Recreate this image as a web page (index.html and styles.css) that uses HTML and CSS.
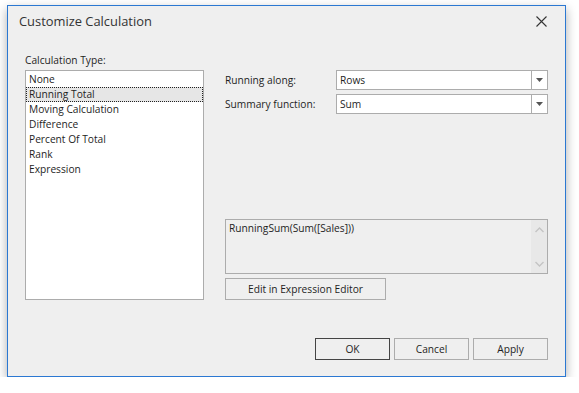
FILE: index.html
```html
<!DOCTYPE html>
<html>
<head>
<meta charset="utf-8">
<link rel="stylesheet" href="styles.css">
</head>
<body>
<div class="dialog">
  <div class="titlebar">
    <span class="title">Customize Calculation</span>
    <svg class="close" width="11" height="11" viewBox="0 0 11 11"><path d="M0.5 0.5 L10.5 10.5 M10.5 0.5 L0.5 10.5" stroke="#333" stroke-width="1.1" fill="none"/></svg>
  </div>
  <div class="content">
    <div class="left">
      <div class="group-label">Calculation Type:</div>
      <ul class="list">
        <li>None</li>
        <li class="selected">Running Total</li>
        <li>Moving Calculation</li>
        <li>Difference</li>
        <li>Percent Of Total</li>
        <li>Rank</li>
        <li>Expression</li>
      </ul>
    </div>
    <div class="right">
      <div class="field">
        <span class="field-label">Running along:</span>
        <div class="combo"><span class="combo-text">Rows</span><span class="combo-btn"><svg width="7" height="4" viewBox="0 0 7 4"><path d="M0 0 H7 L3.5 4 Z" fill="#555"/></svg></span></div>
      </div>
      <div class="field">
        <span class="field-label">Summary function:</span>
        <div class="combo"><span class="combo-text">Sum</span><span class="combo-btn"><svg width="7" height="4" viewBox="0 0 7 4"><path d="M0 0 H7 L3.5 4 Z" fill="#555"/></svg></span></div>
      </div>
      <div class="spacer"></div>
      <div class="memo">
        <span class="memo-text">RunningSum(Sum([Sales]))</span>
        <div class="scrollbar">
          <svg width="9" height="6" viewBox="0 0 9 6"><path d="M0.5 5 L4.5 1 L8.5 5" stroke="#c4c4c4" stroke-width="1.4" fill="none"/></svg>
          <svg width="9" height="6" viewBox="0 0 9 6"><path d="M0.5 1 L4.5 5 L8.5 1" stroke="#c4c4c4" stroke-width="1.4" fill="none"/></svg>
        </div>
      </div>
      <button class="btn btn-wide">Edit in Expression Editor</button>
    </div>
  </div>
  <div class="footer">
    <button class="btn btn-default">OK</button>
    <button class="btn">Cancel</button>
    <button class="btn">Apply</button>
  </div>
</div>
</body>
</html>
```
FILE: styles.css
```css
html, body {
  margin: 0;
  padding: 0;
  background: #ffffff;
}
body {
  font-family: "Open Sans", "Noto Sans", sans-serif;
  font-size: 10.2px;
  color: #1e1e1e;
}
.dialog {
  margin: 5px 0 0 7px;
  width: 559px;
  height: 372px;
  box-sizing: border-box;
  border: 1px solid #2b78d2;
  background: #efefef;
  box-shadow: 0 4px 10px rgba(0,0,0,0.32);
  display: flex;
  flex-direction: column;
}
.titlebar {
  height: 30px;
  display: flex;
  align-items: center;
  justify-content: space-between;
  padding: 0 18px 0 11px;
}
.title {
  font-size: 12.9px;
  color: #333;
}
.close {
  display: block;
}
.content {
  display: flex;
  padding: 0 17px;
  gap: 21px;
}
.left {
  width: 179px;
  display: flex;
  flex-direction: column;
}
.group-label {
  height: 34px;
  line-height: 16px;
  padding-top: 16px;
  box-sizing: border-box;
}
.list {
  list-style: none;
  margin: 0;
  padding: 1px 0;
  height: 230px;
  box-sizing: border-box;
  border: 1px solid #acacac;
  background: #fff;
}
.list li {
  height: 15px;
  line-height: 15px;
  padding-left: 3px;
  box-sizing: border-box;
}
.list li.selected {
  background: #e6e6e6;
  outline: 1px dotted #222;
  outline-offset: -1px;
}
.right {
  flex: 1;
  display: flex;
  flex-direction: column;
  padding-top: 34px;
}
.field {
  display: flex;
  align-items: center;
  height: 20px;
  margin-bottom: 4px;
}
.field-label {
  width: 111px;
}
.combo {
  flex: 1;
  height: 20px;
  box-sizing: border-box;
  border: 1px solid #acacac;
  background: #fff;
  display: flex;
}
.combo-text {
  flex: 1;
  line-height: 18px;
  padding-left: 3px;
}
.combo-btn {
  width: 15px;
  border-left: 1px solid #acacac;
  display: flex;
  align-items: center;
  justify-content: center;
}
.combo-btn svg {
  display: block;
}
.spacer {
  flex: 1;
}
.memo {
  height: 55px;
  box-sizing: border-box;
  border: 1px solid #acacac;
  background: #efefef;
  display: flex;
}
.memo-text {
  flex: 1;
  padding: 1px 3px;
  line-height: 14px;
}
.scrollbar {
  width: 16px;
  background: #e8e8e8;
  display: flex;
  flex-direction: column;
  justify-content: space-between;
  align-items: center;
  padding: 7px 0 6px;
}
.scrollbar svg {
  display: block;
}
.btn {
  font-family: inherit;
  font-size: 10.2px;
  color: #1e1e1e;
  height: 22px;
  width: 75px;
  padding: 0;
  box-sizing: border-box;
  border: 1px solid #acacac;
  background: #efefef;
}
.btn-wide {
  margin-top: 4px;
  width: 161px;
}
.btn-default {
  border-color: #444;
}
.footer {
  display: flex;
  justify-content: flex-end;
  gap: 4px;
  padding: 38px 17px 0 0;
}
```
